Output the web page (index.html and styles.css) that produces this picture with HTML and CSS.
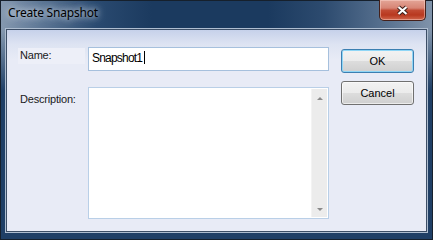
FILE: index.html
```html
<!DOCTYPE html>
<html lang="en">
<head>
    <meta charset="UTF-8">
    <title>Create Snapshot</title>
    <link rel="stylesheet" href="styles.css">
</head>
<body>
    <div class="window">
        <div class="titlebar">
            <span class="title">Create Snapshot</span>
            <button class="close-btn" aria-label="Close">
                <svg width="13" height="11" viewBox="0 0 13 11">
                    <path d="M2.5 2 L10.5 9 M10.5 2 L2.5 9" stroke="#3b1e19" stroke-width="4.2" fill="none"/>
                    <path d="M2.5 2 L10.5 9 M10.5 2 L2.5 9" stroke="#ffffff" stroke-width="2.2" fill="none"/>
                </svg>
            </button>
        </div>

        <div class="client">
            <div class="fields">
                <div class="row">
                    <label class="label label-name">Name:</label>
                    <div class="textbox"><span class="value">Snapshot1</span><span class="caret"></span></div>
                </div>
                <div class="row">
                    <label class="label label-desc">Description:</label>
                    <div class="textarea">
                        <div class="scrollbar">
                            <span class="arrow arrow-up"></span>
                            <span class="arrow arrow-down"></span>
                        </div>
                    </div>
                </div>
            </div>
            <div class="buttons">
                <button class="btn btn-default">OK</button>
                <button class="btn">Cancel</button>
            </div>
        </div>
    </div>
</body>
</html>
```

FILE: styles.css
```css
body {
    margin: 0;
    width: 433px;
    height: 240px;
    overflow: hidden;
    font-family: 'Liberation Sans', Arial, sans-serif;
    font-size: 11px;
    background-color: #1f3f66;
}
.window {
    width: 433px;
    height: 240px;
    box-sizing: border-box;
    border: 1px solid #16202c;
    padding: 0 5px 7px;
    display: flex;
    flex-direction: column;
    background:
        linear-gradient(to bottom, rgba(31,63,102,0) 30px, #1f3f66 90px),
        linear-gradient(to right, #8599b0 0%, #5a7493 10%, #2a4a70 22%, #1b3a5f 35%, #1b3a5f 62%, #2d4b6f 75%, #5b7492 90%, #8093aa 100%);
}
.titlebar {
    height: 28px;
    flex-shrink: 0;
    display: flex;
    align-items: flex-start;
}
.title {
    margin-top: 4px;
    padding-left: 2px;
    font-family: 'Segoe UI', 'Noto Sans', sans-serif;
    font-size: 12px;
    line-height: 16px;
    letter-spacing: -0.2px;
    color: #000000;
    text-shadow: 0 0 6px #dfe6ee, 0 0 10px rgba(220,230,240,0.8);
}
.close-btn {
    margin-left: auto;
    margin-right: 1px;
    margin-top: -1px;
    width: 47px;
    height: 21px;
    box-sizing: border-box;
    padding: 0;
    border: 1px solid #44201a;
    border-top: none;
    border-radius: 0 0 5px 5px;
    display: flex;
    align-items: center;
    justify-content: center;
    background: linear-gradient(to bottom, #e3a597 0%, #d78575 40%, #c14a33 52%, #b8381f 75%, #d0674d 100%);
    box-shadow: inset 0 0 0 1px rgba(255,220,210,0.45);
}
.client {
    flex: 1;
    display: flex;
    border: 1px solid #3c4e66;
    box-shadow: 0 0 0 1px #aebdd0;
    background: linear-gradient(to bottom, #c6d1ea 0, #dde3f2 14px, #e8ebf6 30px);
    padding: 17px 11px 12px 11px;
}
.fields {
    display: flex;
    flex-direction: column;
    gap: 16px;
}
.row {
    display: flex;
    align-items: flex-start;
}
.label {
    width: 67px;
    margin-right: 3px;
    padding-left: 2px;
    box-sizing: border-box;
    color: #1a1a1a;
    line-height: 13px;
    letter-spacing: -0.2px;
}
.label-name {
    height: 16px;
    margin-top: 1px;
    padding-top: 1px;
    background-color: #edeff8;
}
.label-desc {
    padding-top: 6px;
}
.textbox {
    width: 241px;
    height: 24px;
    box-sizing: border-box;
    border: 1px solid #a6c0dd;
    background-color: #ffffff;
    padding: 3px 0 0 3px;
    display: flex;
    align-items: flex-start;
    font-size: 12px;
    line-height: 14px;
    letter-spacing: -0.8px;
    color: #000000;
}
.caret {
    width: 1px;
    height: 13px;
    margin-left: 2px;
    background-color: #000000;
}
.textarea {
    width: 241px;
    height: 132px;
    box-sizing: border-box;
    border: 1px solid #b9cfe7;
    background-color: #ffffff;
    display: flex;
    justify-content: flex-end;
}
.scrollbar {
    width: 16px;
    margin: 1px 1px 1px 0;
    box-sizing: border-box;
    background-color: #ececec;
    border-left: 1px solid #f3f3f3;
    display: flex;
    flex-direction: column;
    align-items: center;
    justify-content: space-between;
    padding: 8px 0 6px;
}
.arrow {
    width: 0;
    height: 0;
    border-left: 3px solid transparent;
    border-right: 3px solid transparent;
}
.arrow-up {
    border-bottom: 3px solid #8a8a8a;
}
.arrow-down {
    border-top: 3px solid #8a8a8a;
}
.buttons {
    display: flex;
    flex-direction: column;
    gap: 8px;
    margin-left: 12px;
    padding-top: 2px;
}
.btn {
    width: 73px;
    height: 24px;
    box-sizing: border-box;
    padding: 0;
    border: 1px solid #707070;
    border-radius: 3px;
    background: linear-gradient(to bottom, #f2f2f2 0%, #ebebeb 50%, #dddddd 50%, #cfcfcf 100%);
    box-shadow: inset 0 0 0 1px rgba(255,255,255,0.6);
    font-family: 'Liberation Sans', Arial, sans-serif;
    font-size: 11px;
    color: #000000;
}
.btn-default {
    border-color: #3c7fb1;
    box-shadow: inset 0 0 0 1px #8fd6f6;
}
```
